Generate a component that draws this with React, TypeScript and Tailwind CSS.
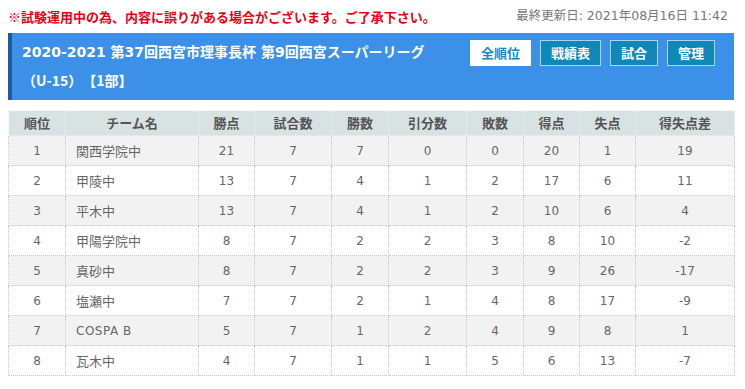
import React from 'react';

type Row = {
  rank: number;
  team: string;
  pts: number;
  played: number;
  win: number;
  draw: number;
  lose: number;
  gf: number;
  ga: number;
  diff: number;
};

const rows: Row[] = [
  { rank: 1, team: '関西学院中', pts: 21, played: 7, win: 7, draw: 0, lose: 0, gf: 20, ga: 1, diff: 19 },
  { rank: 2, team: '甲陵中', pts: 13, played: 7, win: 4, draw: 1, lose: 2, gf: 17, ga: 6, diff: 11 },
  { rank: 3, team: '平木中', pts: 13, played: 7, win: 4, draw: 1, lose: 2, gf: 10, ga: 6, diff: 4 },
  { rank: 4, team: '甲陽学院中', pts: 8, played: 7, win: 2, draw: 2, lose: 3, gf: 8, ga: 10, diff: -2 },
  { rank: 5, team: '真砂中', pts: 8, played: 7, win: 2, draw: 2, lose: 3, gf: 9, ga: 26, diff: -17 },
  { rank: 6, team: '塩瀬中', pts: 7, played: 7, win: 2, draw: 1, lose: 4, gf: 8, ga: 17, diff: -9 },
  { rank: 7, team: 'COSPA B', pts: 5, played: 7, win: 1, draw: 2, lose: 4, gf: 9, ga: 8, diff: 1 },
  { rank: 8, team: '瓦木中', pts: 4, played: 7, win: 1, draw: 1, lose: 5, gf: 6, ga: 13, diff: -7 },
];

const headers = [
  { label: '順位', w: 'w-[57px]' },
  { label: 'チーム名', w: 'w-[133px]' },
  { label: '勝点', w: 'w-[56px]' },
  { label: '試合数', w: 'w-[77px]' },
  { label: '勝数', w: 'w-[57px]' },
  { label: '引分数', w: 'w-[78px]' },
  { label: '敗数', w: 'w-[57px]' },
  { label: '得点', w: 'w-[56px]' },
  { label: '失点', w: 'w-[56px]' },
  { label: '得失点差', w: 'w-[99px]' },
];

const App: React.FC = () => {
  const font = "font-['DejaVu_Sans','Noto_Sans_CJK_JP',sans-serif]";
  const cell = 'border border-dotted border-[#c8c8c8] h-[30px] p-0 text-center';

  return (
    <div className={`w-[745px] h-[389px] bg-white px-2 ${font} [text-spacing-trim:space-all]`}>
      {/* Notice line */}
      <div className="flex items-center justify-between h-[33px] pr-[9px]">
        <p className="text-[13px] font-bold text-[#e60012] font-['Noto_Sans_CJK_JP',sans-serif]">
          ※試験運用中の為、内容に誤りがある場合がございます。ご了承下さい。
        </p>
        <p className="text-[12.5px] text-[#777]">最終更新日: 2021年08月16日 11:42</p>
      </div>

      {/* Title box */}
      <div className="w-[726px] h-[67px] bg-[#3c90e7] border-l-4 border-[#1a5ba3] flex justify-between pl-[10px] pr-[19px]">
        <h1 className="text-white font-bold text-[14px] leading-[28px] pt-[5px]">
          2020-2021 第37回西宮市理事長杯 第9回西宮スーパーリーグ
          <br />
          <span className="font-['Noto_Sans_CJK_JP',sans-serif]">（U-15）【1部】</span>
        </h1>
        <div className="flex gap-[9px] pt-[7px] font-['Noto_Sans_CJK_JP',sans-serif]">
          <button className="h-[26px] px-[10px] bg-white border border-white text-[#1b86c2] text-[13px] font-bold">
            全順位
          </button>
          <button className="h-[26px] px-[10px] bg-[#0f87b8] border border-[#a9d6ee] text-white text-[13px] font-bold">
            戦績表
          </button>
          <button className="h-[26px] px-[10px] bg-[#0f87b8] border border-[#a9d6ee] text-white text-[13px] font-bold">
            試合
          </button>
          <button className="h-[26px] px-[10px] bg-[#0f87b8] border border-[#a9d6ee] text-white text-[13px] font-bold">
            管理
          </button>
        </div>
      </div>

      {/* Standings */}
      <table className="mt-[10px] w-[726px] border-collapse table-fixed text-[12px] text-[#666]">
        <thead>
          <tr className="bg-[#d8e2e2] h-[25px]">
            {headers.map((h) => (
              <th
                key={h.label}
                className={`${h.w} border border-dotted border-[#eef2f2] font-bold text-[13px] text-[#555] font-['Noto_Sans_CJK_JP',sans-serif]`}
              >
                {h.label}
              </th>
            ))}
          </tr>
        </thead>
        <tbody>
          {rows.map((r, i) => (
            <tr key={r.rank} className={i % 2 === 0 ? 'bg-[#f2f2f2]' : 'bg-white'}>
              <td className={cell}>{r.rank}</td>
              <td className={`${cell} text-left pl-[10px]`}>
                <span className={r.team === 'COSPA B' ? 'tracking-[0.5px]' : "font-['Noto_Sans_CJK_JP',sans-serif] text-[13px]"}>
                  {r.team}
                </span>
              </td>
              <td className={cell}>{r.pts}</td>
              <td className={cell}>{r.played}</td>
              <td className={cell}>{r.win}</td>
              <td className={cell}>{r.draw}</td>
              <td className={cell}>{r.lose}</td>
              <td className={cell}>{r.gf}</td>
              <td className={cell}>{r.ga}</td>
              <td className={cell}>{r.diff}</td>
            </tr>
          ))}
        </tbody>
      </table>
    </div>
  );
};

export default App;
